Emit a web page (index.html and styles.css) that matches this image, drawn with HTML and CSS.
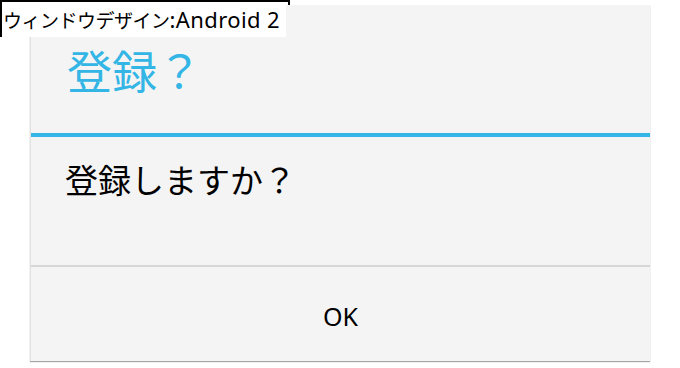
FILE: index.html
```html
<!DOCTYPE html>
<html lang="ja">
<head>
<meta charset="utf-8">
<link rel="stylesheet" href="styles.css">
</head>
<body>
<div class="frame"></div>
<div class="stage">
  <div class="dialog">
    <div class="dialog-title">登録？</div>
    <div class="dialog-divider"></div>
    <div class="dialog-message">登録しますか？</div>
    <div class="dialog-buttons">
      <div class="dialog-button">OK</div>
    </div>
  </div>
</div>
<div class="caption"><span class="caption-ja">ウィンドウデザイン</span><span class="caption-latin">:Android 2</span></div>
</body>
</html>
```

FILE: styles.css
```css
html, body {
  margin: 0;
  padding: 0;
  background: #ffffff;
  width: 680px;
  height: 368px;
  overflow: hidden;
  font-family: "Noto Sans", "Noto Sans CJK JP", sans-serif;
}

.frame {
  position: absolute;
  left: 0;
  top: 0;
  width: 286px;
  height: 33px;
  border: 2px solid #000;
}

.stage {
  position: relative;
  padding: 5px 0 0 30px;
}

.dialog {
  width: 620px;
  height: 356px;
  background: #f4f4f4;
  border-left: 1px solid #e2e2e2;
  box-sizing: border-box;
  display: flex;
  flex-direction: column;
  box-shadow: 0 1px 1px rgba(0, 0, 0, 0.35);
}

.dialog-title {
  height: 128px;
  display: flex;
  align-items: center;
  padding-left: 36px;
  font-family: "Noto Sans CJK JP", sans-serif;
  font-size: 45px;
  line-height: 1;
  color: #33b5e5;
}

.dialog-divider {
  height: 4px;
  background: #33b5e5;
}

.dialog-message {
  height: 128px;
  box-sizing: border-box;
  padding: 26px 0 0 34px;
  font-family: "Noto Sans CJK JP", sans-serif;
  font-size: 33px;
  line-height: 1;
  color: #000;
}

.dialog-buttons {
  flex: 1;
  border-top: 2px solid #d6d6d6;
  display: flex;
}

.dialog-button {
  flex: 1;
  display: flex;
  align-items: center;
  justify-content: center;
  font-family: "Noto Sans", sans-serif;
  font-size: 25px;
  color: #000;
  padding-top: 4px;
}

.caption {
  position: absolute;
  left: 2px;
  top: 2px;
  height: 35px;
  width: 284px;
  box-sizing: border-box;
  padding-left: 1px;
  background: #ffffff;
  line-height: 35px;
  color: #000;
  white-space: nowrap;
}

.caption-ja {
  font-family: "Noto Sans CJK JP", sans-serif;
  font-size: 19px;
  letter-spacing: -0.5px;
}

.caption-latin {
  font-family: "Noto Sans", sans-serif;
  font-size: 22px;
  letter-spacing: 0.4px;
}
```
